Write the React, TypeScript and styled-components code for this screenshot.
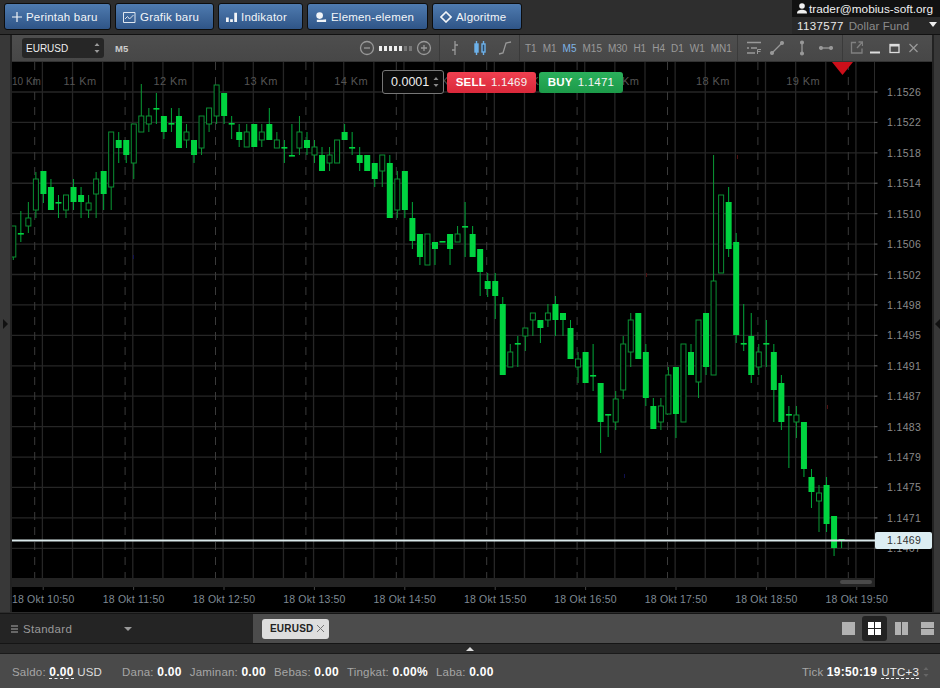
import React from "react";
import styled, { createGlobalStyle } from "styled-components";

// hi, bodyTop, bodyBottom, lo, hollow -- all in screen y
const CANDLES: [number, number, number, number, number][] = [
  [226, 226, 257, 260, 1], [211, 234, 234, 242, 0], [202, 218, 226, 233, 1], [172, 179, 210, 218, 1],
  [171, 171, 194, 203, 0], [179, 187, 210, 210, 0], [195, 203, 203, 218, 0], [195, 195, 210, 218, 1],
  [179, 187, 202, 210, 0], [187, 195, 202, 218, 0], [195, 203, 210, 218, 1], [172, 179, 194, 218, 1],
  [171, 171, 194, 210, 0], [132, 132, 187, 210, 1], [132, 140, 148, 163, 0], [140, 140, 155, 163, 0],
  [124, 124, 163, 179, 1], [84, 116, 132, 132, 1], [108, 116, 124, 132, 1], [93, 109, 109, 124, 0],
  [116, 116, 132, 139, 0], [108, 124, 124, 132, 0], [108, 116, 148, 148, 0], [124, 132, 140, 148, 1],
  [140, 140, 155, 163, 0], [116, 116, 148, 155, 1], [108, 108, 124, 132, 1], [85, 85, 116, 124, 1],
  [93, 93, 116, 124, 0], [116, 124, 124, 139, 0], [124, 132, 140, 147, 0], [124, 132, 147, 147, 1],
  [124, 124, 147, 147, 0], [124, 132, 140, 147, 1], [108, 124, 140, 140, 0], [132, 140, 148, 148, 1],
  [140, 148, 148, 163, 0], [124, 156, 156, 156, 0], [116, 132, 148, 155, 1], [132, 140, 148, 155, 0],
  [140, 147, 155, 163, 1], [147, 155, 171, 171, 0], [147, 155, 163, 171, 1], [140, 140, 163, 163, 1],
  [124, 132, 140, 140, 0], [132, 148, 148, 155, 0], [147, 155, 163, 171, 0], [155, 155, 171, 171, 0],
  [163, 163, 179, 187, 0], [155, 155, 171, 187, 1], [155, 163, 218, 218, 0], [171, 179, 210, 218, 1],
  [171, 171, 210, 218, 0], [202, 218, 241, 249, 0], [234, 234, 257, 265, 0], [234, 234, 265, 265, 1],
  [242, 242, 249, 265, 0], [242, 242, 242, 242, 0], [234, 234, 249, 265, 0], [226, 234, 242, 242, 1],
  [202, 227, 227, 257, 0], [226, 234, 257, 257, 0], [249, 249, 272, 296, 0], [273, 281, 289, 297, 0],
  [273, 281, 296, 319, 0], [297, 304, 375, 375, 0], [344, 352, 367, 367, 1], [336, 344, 344, 367, 0],
  [328, 328, 336, 351, 1], [313, 313, 320, 336, 1], [320, 320, 328, 343, 0], [304, 313, 320, 327, 1],
  [296, 304, 320, 336, 0], [313, 313, 320, 336, 0], [320, 328, 359, 359, 0], [352, 359, 367, 383, 1],
  [352, 352, 383, 383, 0], [344, 376, 376, 391, 0], [383, 383, 422, 453, 0], [415, 415, 415, 437, 0],
  [391, 399, 422, 430, 1], [336, 344, 390, 399, 1], [313, 320, 352, 367, 1], [313, 313, 359, 359, 0],
  [344, 352, 398, 406, 0], [398, 406, 429, 429, 0], [398, 406, 422, 430, 1], [367, 375, 414, 414, 1],
  [367, 367, 414, 438, 0], [344, 344, 422, 422, 1], [344, 352, 375, 375, 0], [320, 320, 382, 398, 1],
  [313, 313, 367, 375, 0], [155, 281, 375, 375, 1], [195, 195, 273, 273, 1], [187, 202, 249, 257, 0],
  [233, 242, 335, 343, 0], [304, 344, 344, 351, 0], [313, 336, 375, 383, 0], [344, 352, 367, 375, 1],
  [320, 344, 344, 367, 0], [344, 352, 390, 422, 0], [375, 383, 422, 430, 0], [406, 415, 415, 468, 0],
  [406, 415, 422, 438, 1], [422, 422, 469, 477, 0], [469, 477, 492, 508, 0], [485, 493, 501, 532, 1],
  [477, 485, 524, 532, 0], [516, 516, 548, 556, 0], [540, 540, 540, 548, 0],
];

const PRICES = ["1.1526", "1.1522", "1.1518", "1.1514", "1.1510", "1.1506", "1.1502", "1.1498", "1.1495", "1.1491", "1.1487", "1.1483", "1.1479", "1.1475", "1.1471", "1.1467"];
const TIMEFRAMES = ["T1", "M1", "M5", "M15", "M30", "H1", "H4", "D1", "W1", "MN1"];
const HOURS = ["11", "12", "13", "14", "15", "16", "17", "18", "19"];

const candleX = (i: number) => 13.3 + 7.53 * i;
const gridY = (k: number) => 92 + 30.42 * k;

const GlobalStyle = createGlobalStyle`
  html, body {
    margin: 0;
    padding: 0;
    background: #2c2c2c;
    overflow: hidden;
  }
  * {
    box-sizing: border-box;
  }
`;

const Page = styled.div`
  width: 940px;
  height: 688px;
  display: flex;
  flex-direction: column;
  background: #2c2c2c;
  font-family: "Liberation Sans", Arial, sans-serif;
  overflow: hidden;
`;

const TopBar = styled.div`
  height: 35px;
  display: flex;
  justify-content: space-between;
  padding-left: 4px;
  border-bottom: 1px solid #111;
  background: #2e2e2e;
`;

const ButtonRow = styled.div`
  display: flex;
  gap: 4px;
  padding-top: 3px;
`;

const ActionButton = styled.div<{ $w: number }>`
  width: ${(p) => p.$w}px;
  height: 27px;
  display: flex;
  align-items: center;
  gap: 4px;
  padding-left: 7px;
  border: 1px solid #0d0d0d;
  border-radius: 3px;
  background: linear-gradient(#4f7bb0, #2f5587);
  color: #f2f5f8;
  font-size: 11.5px;
  letter-spacing: 0.2px;
`;

const Account = styled.div`
  width: 148px;
  height: 34px;
  display: flex;
  flex-direction: column;
  background: #111;
`;

const AccountUser = styled.div`
  height: 17px;
  display: flex;
  align-items: center;
  gap: 1px;
  padding-left: 4px;
  color: #f0f0f0;
  font-size: 11.8px;
  white-space: nowrap;
`;

const AccountFund = styled.div`
  position: relative;
  height: 17px;
  display: flex;
  align-items: center;
  gap: 5px;
  padding-left: 5px;
  background: #282828;
  color: #8b8b8b;
  font-size: 11.5px;
  letter-spacing: 0.1px;

  b {
    color: #e8e8e8;
    font-weight: normal;
    letter-spacing: 0.4px;
  }
`;

const FundCaret = styled.span`
  position: absolute;
  right: 3px;
  top: 5px;
  border-left: 4px solid transparent;
  border-right: 4px solid transparent;
  border-top: 5px solid #eee;
`;

const Workspace = styled.div`
  height: 577px;
  display: flex;
`;

const Rail = styled.div<{ $w: number }>`
  width: ${(p) => p.$w}px;
  display: flex;
  align-items: center;
  justify-content: flex-end;
  background: #383838;
  border-left: ${(p) => (p.$w === 8 ? "2px solid #222" : "none")};
  border-right: ${(p) => (p.$w === 12 ? "2px solid #222" : "none")};
`;

const RailArrow = styled.span<{ $right?: boolean }>`
  margin: 0 ${(p) => (p.$right ? "0" : "auto")} 0 ${(p) => (p.$right ? "0" : "3px")};
  border-top: 5px solid transparent;
  border-bottom: 5px solid transparent;
  ${(p) => (p.$right ? "border-right: 5px solid #111;" : "border-left: 5px solid #111;")}
`;

const ChartWindow = styled.div`
  width: 920px;
  display: flex;
  flex-direction: column;
`;

const ChartToolbar = styled.div`
  height: 27px;
  display: flex;
  background: linear-gradient(#4e4e4e, #474747);
  border-bottom: 1px solid #333;
`;

const ToolSection = styled.div<{ $w: number; $gap?: number; $pad?: number }>`
  width: ${(p) => p.$w}px;
  display: flex;
  align-items: center;
  gap: ${(p) => p.$gap ?? 0}px;
  padding-left: ${(p) => p.$pad ?? 0}px;
  border-right: 1px solid #3a3a3a;

  &:last-child {
    border-right: none;
  }
`;

const SymbolSelect = styled.div`
  width: 82px;
  height: 20px;
  margin-left: 10px;
  display: flex;
  align-items: center;
  justify-content: space-between;
  padding: 0 4px;
  border-radius: 3px;
  background: #262626;
  color: #eee;
  font-size: 10px;
`;

const Period = styled.span`
  margin-left: 11px;
  color: #ccc;
  font-size: 9.5px;
  font-weight: bold;
`;

const ZoomGroup = styled.div`
  margin-left: auto;
  margin-right: 7px;
  display: flex;
  align-items: center;
  gap: 4px;
`;

const ZoomDots = styled.div`
  display: flex;
  gap: 2px;
`;

const ZoomDot = styled.span<{ $on: boolean }>`
  width: 3px;
  height: 5px;
  background: ${(p) => (p.$on ? "#eee" : "#777")};
`;

const Timeframe = styled.span<{ $active: boolean }>`
  color: ${(p) => (p.$active ? "#7fb4e6" : "#9a9a9a")};
  font-size: 10px;
`;

const ChartCanvas = styled.div`
  position: relative;
  height: 550px;
  background: #000;
`;

const ChartSvg = styled.svg`
  display: block;
`;

const TradePanel = styled.div`
  position: absolute;
  left: 370px;
  top: 8px;
  display: flex;
  align-items: center;
  gap: 3px;
`;

const StepBox = styled.div`
  width: 62px;
  height: 24px;
  display: flex;
  align-items: center;
  justify-content: space-between;
  padding: 0 4px 0 8px;
  border: 1px solid #777;
  border-radius: 3px;
  background: #0a0a0a;
  color: #eee;
  font-size: 12.5px;
`;

const TradeButton = styled.div<{ $buy?: boolean }>`
  width: ${(p) => (p.$buy ? 84 : 89)}px;
  height: 21px;
  display: flex;
  align-items: center;
  justify-content: center;
  gap: 5px;
  border-radius: 3px;
  background: ${(p) => (p.$buy ? "linear-gradient(#2bb05c, #1c9a49)" : "linear-gradient(#f04050, #d9283a)")};
  color: #f4f4f4;
  font-size: 11.5px;
  letter-spacing: 0.2px;

  b {
    color: #fff;
    font-weight: bold;
  }
`;

const TabBar = styled.div`
  height: 31px;
  display: flex;
  border-top: 1px solid #151515;
  border-bottom: 1px solid #151515;
  margin-top: 1px;
`;

const LayoutMenu = styled.div`
  width: 253px;
  display: flex;
  align-items: center;
  padding-left: 11px;
  gap: 5px;
  background: #242424;
  color: #999;
  font-size: 11.5px;
  letter-spacing: 0.3px;
`;

const MenuCaret = styled.span`
  margin-left: 47px;
  border-left: 4px solid transparent;
  border-right: 4px solid transparent;
  border-top: 4px solid #999;
`;

const TabStrip = styled.div`
  flex: 1;
  display: flex;
  align-items: center;
  justify-content: space-between;
  padding-left: 9px;
  background: #4c4c4c;
`;

const ChartTab = styled.div`
  width: 67px;
  height: 20px;
  display: flex;
  align-items: center;
  justify-content: space-between;
  padding: 0 4px 0 8px;
  border-radius: 3px;
  background: #dedede;
  color: #222;
  font-size: 10px;
  font-weight: bold;
  letter-spacing: 0.2px;
`;

const LayoutIcons = styled.div`
  display: flex;
  align-items: center;
  gap: 1.5px;
`;

const LayoutIcon = styled.div<{ $active?: boolean }>`
  width: 25px;
  height: 25px;
  display: flex;
  align-items: center;
  justify-content: center;
  border-radius: 3px;
  background: ${(p) => (p.$active ? "#222" : "transparent")};
`;

const Handle = styled.div`
  height: 10px;
  display: flex;
  justify-content: center;
  align-items: center;
  background: #2a2a2a;
  border-bottom: 1px solid #1a1a1a;
`;

const HandleArrow = styled.span`
  border-left: 4px solid transparent;
  border-right: 4px solid transparent;
  border-bottom: 4px solid #ddd;
`;

const StatusBar = styled.div`
  flex: 1;
  display: flex;
  align-items: center;
  padding: 2px 11px 0 12px;
  background: #4a4a4a;
  color: #a6a6a6;
  font-size: 11.5px;
  letter-spacing: 0.2px;
  white-space: nowrap;

  b {
    color: #fff;
    font-size: 12px;
    font-weight: bold;
    letter-spacing: 0.3px;
  }
`;

const Stat = styled.span<{ $gap?: number }>`
  margin-right: ${(p) => p.$gap ?? 8}px;
`;

const Dashed = styled.span`
  border-bottom: 1px dashed #eee;
  color: #eee;
`;

const Currency = styled.span`
  color: #ddd;
`;

const TickBlock = styled.div`
  margin-left: auto;
  display: flex;
  align-items: center;
  gap: 4px;
`;

const Spinner = ({ color = "#999" }: { color?: string }) => (
  <svg width="6" height="12" viewBox="0 0 6 12">
    <path d="M3 1 L5.5 4 H0.5 Z M3 11 L5.5 8 H0.5 Z" fill={color} />
  </svg>
);

const Candles = () => (
  <g>
    {CANDLES.map(([hi, top, bottom, lo, hollow], i) => {
      const x = candleX(i);
      const doji = top === bottom;
      return (
        <g key={i}>
          <line x1={x} x2={x} y1={hi} y2={lo} stroke={hollow ? "#0a9a35" : "#00a83a"} strokeWidth="1" />
          {hollow ? (
            <rect x={x - 2.5} y={top} width={5} height={bottom - top} fill="#000" stroke="#0a8f33" strokeWidth="1" />
          ) : (
            <rect x={x - 3} y={doji ? top - 1 : top} width={6} height={doji ? 1.6 : bottom - top} fill="#00d440" />
          )}
        </g>
      );
    })}
  </g>
);

const Chart = () => (
  <ChartSvg width="920" height="550" viewBox="12 62 920 550" fontFamily="Liberation Sans, Arial, sans-serif">
    {PRICES.map((_, k) => (
      <line key={k} x1="12" x2="878" y1={gridY(k)} y2={gridY(k)} stroke="#262626" strokeWidth="1.3" />
    ))}
    {Array.from({ length: 28 }, (_, k) => 42.4 + 30.13 * k).map((x) => (
      <line key={x} x1={x} x2={x} y1="62" y2="578" stroke="#262626" strokeWidth="1.3" />
    ))}
    {Array.from({ length: 10 }, (_, k) => 34.7 + 90.4 * k).map((x) => (
      <line key={x} x1={x} x2={x} y1="62" y2="578" stroke="#3a3a3a" strokeWidth="1" strokeDasharray="8 7" />
    ))}
    <text x="12" y="85" fontSize="10" fill="#555">10 Km</text>
    {HOURS.map((h, k) => (
      <text key={h} x={80 + 90.4 * k} y="85" fontSize="11" letterSpacing="0.4" fill="#555" textAnchor="middle">
        {h} Km
      </text>
    ))}
    <rect x="874" y="62" width="1" height="516" fill="#2a2a2a" />
    <Candles />
    <rect x="133" y="255" width="1" height="4" fill="#101050" />
    <rect x="624" y="474" width="1" height="4" fill="#101050" />
    <rect x="737" y="155" width="1" height="4" fill="#501010" />
    <rect x="827" y="405" width="1" height="4" fill="#501010" />
    <rect x="646" y="273" width="1" height="4" fill="#501010" />
    {PRICES.map((p, k) => (
      <text key={p} x="887" y={gridY(k) + 4} fontSize="10.5" letterSpacing="0.35" fill="#8a8a8a">
        {p}
      </text>
    ))}
    {PRICES.map((p, k) => (
      <rect key={p} x="874" y={gridY(k) - 0.5} width="3" height="1" fill="#555" />
    ))}
    <path d="M832 62 H853 L842.5 75 Z" fill="#cc0f1a" />
    <rect x="12" y="578" width="863" height="9" fill="#242424" />
    <rect x="840" y="580" width="32" height="4" rx="2" fill="#4a4a4a" />
    {Array.from({ length: 10 }, (_, k) => 42.7 + 90.4 * k).map((x) => (
      <rect key={x} x={x} y="587" width="1" height="3" fill="#444" />
    ))}
    {["10:50", "11:50", "12:50", "13:50", "14:50", "15:50", "16:50", "17:50", "18:50", "19:50"].map((t, k) => (
      <text key={t} x={43.2 + 90.4 * k} y="603" fontSize="10.5" letterSpacing="0.2" fill="#7f8a94" textAnchor="middle">
        18 Okt {t}
      </text>
    ))}
    <line x1="12" x2="875" y1="540.5" y2="540.5" stroke="#d9e8ea" strokeWidth="2" />
    <rect x="875" y="532" width="57" height="17" rx="2" fill="#dcedf2" />
    <text x="887" y="544" fontSize="10.5" letterSpacing="0.35" fill="#333">1.1469</text>
  </ChartSvg>
);

const ToolIcon = ({ w = 16, children }: { w?: number; children: React.ReactNode }) => (
  <svg width={w} height="16" viewBox={`0 0 ${w} 16`} fill="none" stroke="#999" strokeWidth="1.3">
    {children}
  </svg>
);

const App: React.FC = () => {
  return (
    <Page>
      <GlobalStyle />
      <TopBar>
        <ButtonRow>
          <ActionButton $w={107}>
            <svg width="10" height="10" viewBox="0 0 10 10" stroke="#f2f5f8" strokeWidth="1.2">
              <path d="M5 0 V10 M0 5 H10" />
            </svg>
            Perintah baru
          </ActionButton>
          <ActionButton $w={99}>
            <svg width="13" height="12" viewBox="0 0 13 12" fill="none" stroke="#dfe7f0" strokeWidth="1">
              <path d="M0.5 1.5 H12 V11.5 H0.5 Z M2 8 L4.5 5.5 L6.5 8 L10.5 4" />
            </svg>
            Grafik baru
          </ActionButton>
          <ActionButton $w={85}>
            <svg width="11" height="11" viewBox="0 0 12 12" fill="#f2f5f8">
              <path d="M0 7 H3 V12 H0 Z M4.5 9 H7.5 V12 H4.5 Z M9 2 H12 V12 H9 Z" />
            </svg>
            Indikator
          </ActionButton>
          <ActionButton $w={121}>
            <svg width="12" height="12" viewBox="0 0 13 12" fill="#f2f5f8">
              <circle cx="5" cy="4.5" r="3.6" />
              <path d="M2 9 H8 L12 8.5 V11.5 H2 Z" />
            </svg>
            Elemen-elemen
          </ActionButton>
          <ActionButton $w={90}>
            <svg width="12" height="12" viewBox="0 0 12 12" fill="none" stroke="#f2f5f8" strokeWidth="1.6">
              <path d="M6 1 L11 6 L6 11 L1 6 Z" />
            </svg>
            Algoritme
          </ActionButton>
        </ButtonRow>
        <Account>
          <AccountUser>
            <svg width="12" height="11" viewBox="0 0 12 11" fill="#f0f0f0">
              <circle cx="6" cy="3" r="2.8" />
              <path d="M1 10.5 C1 7.5 3.5 6.8 6 6.8 C8.5 6.8 11 7.5 11 10.5 Z" />
            </svg>
            trader@mobius-soft.org
          </AccountUser>
          <AccountFund>
            <b>1137577</b> Dollar Fund
            <FundCaret />
          </AccountFund>
        </Account>
      </TopBar>

      <Workspace>
        <Rail $w={12}>
          <RailArrow />
        </Rail>
        <ChartWindow>
          <ChartToolbar>
            <ToolSection $w={428}>
              <SymbolSelect>
                EURUSD
                <Spinner />
              </SymbolSelect>
              <Period>M5</Period>
              <ZoomGroup>
                <ToolIcon>
                  <circle cx="8" cy="8" r="6.5" />
                  <path d="M5 8 H11" />
                </ToolIcon>
                <ZoomDots>
                  {[1, 1, 1, 1, 1, 0, 0].map((on, i) => (
                    <ZoomDot key={i} $on={!!on} />
                  ))}
                </ZoomDots>
                <ToolIcon>
                  <circle cx="8" cy="8" r="6.5" />
                  <path d="M5 8 H11 M8 5 V11" />
                </ToolIcon>
              </ZoomGroup>
            </ToolSection>
            <ToolSection $w={80} $gap={9} $pad={7}>
              <ToolIcon>
                <path d="M8 1 V15 M8 5 H11 M5 10 H8" />
              </ToolIcon>
              <svg width="16" height="16" viewBox="0 0 16 16" fill="none" stroke="#6db1ea" strokeWidth="1.4">
                <path d="M4.5 1 V15 M11.5 1 V15" />
                <rect x="3" y="4" width="3" height="8" fill="#6db1ea" />
                <rect x="10" y="4" width="3" height="8" fill="#2e4a66" />
              </svg>
              <ToolIcon>
                <path d="M2 14 L6 13 L9 3 L14 2" />
              </ToolIcon>
            </ToolSection>
            <ToolSection $w={218} $gap={6} $pad={5}>
              {TIMEFRAMES.map((t) => (
                <Timeframe key={t} $active={t === "M5"}>
                  {t}
                </Timeframe>
              ))}
            </ToolSection>
            <ToolSection $w={105} $gap={3} $pad={8}>
              <ToolIcon w={20}>
                <path d="M1 2.5 H15 M5 8 H11 M1 13 H9 M1 8 H3" />
                <path d="M11.5 14 V9.5 H15 M11.5 11.5 H14.5" strokeWidth="1" />
              </ToolIcon>
              <ToolIcon w={16}>
                <path d="M3 13 L13 3" />
                <circle cx="3" cy="13" r="1.4" fill="#999" />
                <circle cx="13" cy="3" r="1.4" fill="#999" />
              </ToolIcon>
              <ToolIcon w={28}>
                <path d="M14 2 V14" />
                <circle cx="14" cy="2.5" r="1.4" fill="#999" />
                <circle cx="14" cy="13.5" r="1.4" fill="#999" />
              </ToolIcon>
              <ToolIcon w={14}>
                <path d="M1 8 H13" />
                <circle cx="2" cy="8" r="1.4" fill="#999" />
                <circle cx="12" cy="8" r="1.4" fill="#999" />
              </ToolIcon>
            </ToolSection>
            <ToolSection $w={89} $gap={6} $pad={7}>
              <ToolIcon w={13}>
                <path d="M6 2.5 H1.5 V13 H12 V8.5 M7 8 L12 2.5 M8.5 2 H12.5 V6" stroke="#808080" />
              </ToolIcon>
              <ToolIcon w={13}>
                <path d="M1 12.5 H11" stroke="#ddd" strokeWidth="2" />
              </ToolIcon>
              <ToolIcon w={13}>
                <rect x="2" y="4.5" width="9" height="8" stroke="#ddd" />
                <path d="M2 5.5 H11" stroke="#ddd" strokeWidth="2" />
              </ToolIcon>
              <ToolIcon w={13}>
                <path d="M2.5 4 L10.5 12 M10.5 4 L2.5 12" />
              </ToolIcon>
            </ToolSection>
          </ChartToolbar>
          <ChartCanvas>
            <Chart />
            <TradePanel>
              <StepBox>
                0.0001
                <Spinner color="#888" />
              </StepBox>
              <TradeButton>
                <b>SELL</b> 1.1469
              </TradeButton>
              <TradeButton $buy>
                <b>BUY</b> 1.1471
              </TradeButton>
            </TradePanel>
          </ChartCanvas>
        </ChartWindow>
        <Rail $w={8}>
          <RailArrow $right />
        </Rail>
      </Workspace>

      <TabBar>
        <LayoutMenu>
          <svg width="7" height="8" viewBox="0 0 7 8" stroke="#aaa" strokeWidth="1">
            <path d="M0 1 H7 M0 4 H7 M0 7 H7" />
          </svg>
          Standard
          <MenuCaret />
        </LayoutMenu>
        <TabStrip>
          <ChartTab>
            EURUSD
            <svg width="9" height="9" viewBox="0 0 9 9" stroke="#777" strokeWidth="1">
              <path d="M1 1 L8 8 M8 1 L1 8" />
            </svg>
          </ChartTab>
          <LayoutIcons>
            <LayoutIcon>
              <svg width="13" height="13" viewBox="0 0 13 13" fill="#b2b2b2">
                <rect width="13" height="13" />
              </svg>
            </LayoutIcon>
            <LayoutIcon $active>
              <svg width="13" height="13" viewBox="0 0 13 13" fill="#fff">
                <path d="M0 0 H6 V6 H0 Z M7 0 H13 V6 H7 Z M0 7 H6 V13 H0 Z M7 7 H13 V13 H7 Z" />
              </svg>
            </LayoutIcon>
            <LayoutIcon>
              <svg width="13" height="13" viewBox="0 0 13 13" fill="#b2b2b2">
                <path d="M0 0 H6 V13 H0 Z M7 0 H13 V13 H7 Z" />
              </svg>
            </LayoutIcon>
            <LayoutIcon>
              <svg width="13" height="13" viewBox="0 0 13 13" fill="#b2b2b2">
                <path d="M0 0 H13 V6 H0 Z M0 7 H13 V13 H0 Z" />
              </svg>
            </LayoutIcon>
          </LayoutIcons>
        </TabStrip>
      </TabBar>

      <Handle>
        <HandleArrow />
      </Handle>

      <StatusBar>
        <Stat $gap={20}>
          Saldo: <Dashed><b>0.00</b></Dashed> <Currency>USD</Currency>
        </Stat>
        <Stat>Dana: <b>0.00</b></Stat>
        <Stat>Jaminan: <b>0.00</b></Stat>
        <Stat>Bebas: <b>0.00</b></Stat>
        <Stat>Tingkat: <b>0.00%</b></Stat>
        <Stat>Laba: <b>0.00</b></Stat>
        <TickBlock>
          <span>
            Tick <b>19:50:19</b>
          </span>
          <Dashed>UTC+3</Dashed>
          <Spinner color="#666" />
        </TickBlock>
      </StatusBar>
    </Page>
  );
};

export default App;
